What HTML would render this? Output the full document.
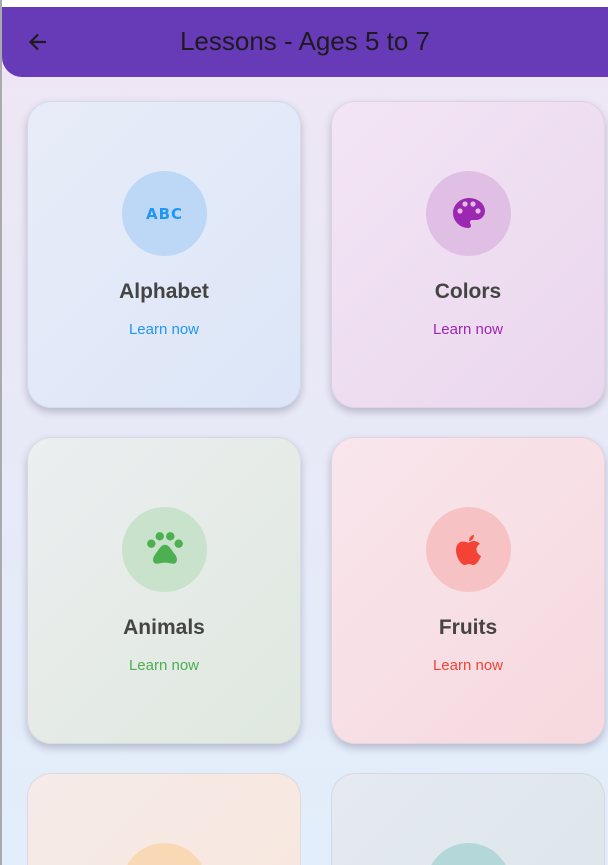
<!DOCTYPE html>
<html><head><meta charset="utf-8"><style>
*{margin:0;padding:0;box-sizing:border-box}
html{width:608px;height:865px;overflow:hidden}
body{width:608px;height:865px;overflow:hidden;font-family:"Liberation Sans",sans-serif;background:linear-gradient(180deg,#efe6f4 0%,#e8e9f7 50%,#e2eefb 100%);position:relative}
.edge{position:absolute;left:0;top:0;width:2px;height:865px;background:#a9a9b0}
.top{position:absolute;left:0;top:0;width:608px;height:7px;background:#fff}
.bar{position:absolute;left:2px;top:7px;width:606px;height:70px;background:#673ab7;border-bottom-left-radius:20px}
.bar h1{position:absolute;left:0;right:0;top:19px;text-align:center;font-weight:400;font-size:26px;color:#1d1b20}
.bar svg{position:absolute;left:24px;top:23px}
.card{position:absolute;width:274px;height:307px;border-radius:24px;box-shadow:0 4px 8px rgba(60,60,90,.28);border:1px solid rgba(200,200,220,.5);overflow:hidden}
.c1{left:27px}.c2{left:331px}
.r1{top:101px}.r2{top:437px}.r3{top:773px;height:92px;border-bottom-left-radius:0;border-bottom-right-radius:0;border-bottom:none;box-shadow:none}
.circ{position:absolute;left:94px;top:69px;width:85px;height:85px;border-radius:50%;display:flex;align-items:center;justify-content:center}
.t{position:absolute;left:0;right:0;top:178px;text-align:center;font-size:21px;font-weight:bold;color:#444}
.l{position:absolute;left:0;right:0;top:219px;text-align:center;font-size:15px}
</style></head><body>
<div class="top"></div><div class="edge"></div>
<div class="bar"><svg width="24" height="24" viewBox="0 0 24 24"><path d="M20 12H5M12 4.5L4.5 12 12 19.5" fill="none" stroke="#1d1b20" stroke-width="2.2"/></svg><h1>Lessons - Ages 5 to 7</h1></div>

<div class="card c1 r1" style="background:linear-gradient(135deg,#e8ecf8,#dce6f8)">
<div class="circ" style="background:#bcd8f6"><span style="font-weight:900;font-size:15px;color:#2196f3;letter-spacing:1px;font-family:'DejaVu Sans',sans-serif">ABC</span></div>
<div class="t">Alphabet</div><div class="l" style="color:#2196f3">Learn now</div></div>

<div class="card c2 r1" style="background:linear-gradient(135deg,#f3e5f5,#ead6ee)">
<div class="circ" style="background:#e0bfe4"><svg width="36" height="36" viewBox="0 0 36 36"><path d="M18 2C9 2 2 9 2 17c0 8 7 15 15 15c2 0 3-1 3-2.5c0-1-1-2-1-3c0-1.5 1-2.5 2.5-2.5H25c5 0 9-4 9-9C34 8 27 2 18 2z" fill="#9c27b0"/><circle cx="9" cy="15" r="2.6" fill="#e0bfe4"/><circle cx="14" cy="8" r="2.6" fill="#e0bfe4"/><circle cx="22" cy="8" r="2.6" fill="#e0bfe4"/><circle cx="27" cy="15" r="2.6" fill="#e0bfe4"/></svg></div>
<div class="t">Colors</div><div class="l" style="color:#9c27b0">Learn now</div></div>

<div class="card c1 r2" style="background:linear-gradient(135deg,#eceef0,#dfe8df)">
<div class="circ" style="background:#c8e2cb"><svg width="40" height="40" viewBox="0 0 38 38"><circle cx="6" cy="13" r="4" fill="#4caf50"/><circle cx="14" cy="6" r="4" fill="#4caf50"/><circle cx="24" cy="6" r="4" fill="#4caf50"/><circle cx="32" cy="13" r="4" fill="#4caf50"/><path d="M19 14c-4 0-6 5-10 10c-2 3-2 8 2 8c3 0 5-1 8-1s5 1 8 1c4 0 4-5 2-8c-4-5-6-10-10-10z" fill="#4caf50"/></svg></div>
<div class="t">Animals</div><div class="l" style="color:#4caf50">Learn now</div></div>

<div class="card c2 r2" style="background:linear-gradient(135deg,#f8e6ec,#f6d9df)">
<div class="circ" style="background:#f7c2c4"><svg width="30" height="34" viewBox="0 0 30 34"><path d="M15 10c-2-1-4-1.5-6-1.5C5 8.5 2 12 2 17c0 7 5 15 8.5 15c2 0 3-1 4.5-1s2.5 1 4.5 1c3 0 6-5 7.5-9c-3-1.5-4.5-4-4.5-6.5c0-2.5 1.5-4.5 3.5-5.5c-1.5-2-3.5-3-6-3c-2 0-4 .8-5 1.5z" fill="#f44336"/><path d="M15 8c0-3 2-6 5-6c0 3-2 6-5 6z" fill="#f44336"/></svg></div>
<div class="t">Fruits</div><div class="l" style="color:#f44336">Learn now</div></div>

<div class="card c1 r3" style="background:linear-gradient(135deg,#f6ebe9,#f7e7df)">
<div class="circ" style="background:#f9d8b5"></div></div>
<div class="card c2 r3" style="background:linear-gradient(135deg,#e6e9f1,#dde7ec)">
<div class="circ" style="background:#b4d8d9"></div></div>
</body></html>
